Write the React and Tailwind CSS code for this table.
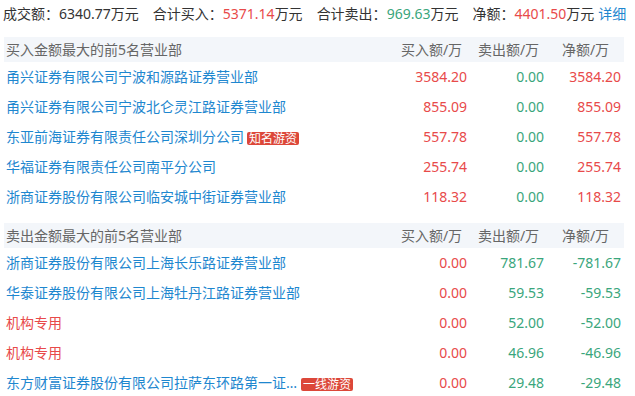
import React from 'react';

const RED = 'text-[#e84a4a]';
const GREEN = 'text-[#3aa67c]';
const BLUE = 'text-[#1e87cf]';

const buyRows = [
  { name: '甬兴证券有限公司宁波和源路证券营业部', buy: '3584.20', sell: '0.00', net: '3584.20' },
  { name: '甬兴证券有限公司宁波北仑灵江路证券营业部', buy: '855.09', sell: '0.00', net: '855.09' },
  { name: '东亚前海证券有限责任公司深圳分公司', badge: '知名游资', buy: '557.78', sell: '0.00', net: '557.78' },
  { name: '华福证券有限责任公司南平分公司', buy: '255.74', sell: '0.00', net: '255.74' },
  { name: '浙商证券股份有限公司临安城中街证券营业部', buy: '118.32', sell: '0.00', net: '118.32' },
];

const sellRows = [
  { name: '浙商证券股份有限公司上海长乐路证券营业部', buy: '0.00', sell: '781.67', net: '-781.67' },
  { name: '华泰证券股份有限公司上海牡丹江路证券营业部', buy: '0.00', sell: '59.53', net: '-59.53' },
  { name: '机构专用', inst: true, buy: '0.00', sell: '52.00', net: '-52.00' },
  { name: '机构专用', inst: true, buy: '0.00', sell: '46.96', net: '-46.96' },
  { name: '东方财富证券股份有限公司拉萨东环路第一证券营业部', badge: '一线游资', clip: true, buy: '0.00', sell: '29.48', net: '-29.48' },
];

const Header = ({ title }) => (
  <div className="flex h-[25px] items-center bg-[#f3f6fa] text-[#666]">
    <div className="flex-1 pl-[2px]">{title}</div>
    <div className="w-[77px] text-center">买入额/万</div>
    <div className="w-[77px] text-center">卖出额/万</div>
    <div className="w-[77px] text-center">净额/万</div>
  </div>
);

const Row = ({ row, netColor }) => (
  <div className="flex h-[30px] items-center">
    <div className="flex min-w-0 flex-1 items-center pl-[2px]">
      <span className={`${row.inst ? RED : BLUE} ${row.clip ? 'max-w-[292px] truncate' : 'whitespace-nowrap'}`}>
        {row.name}
      </span>
      {row.badge && (
        <span className="ml-[3px] mt-[3px] rounded-[2px] bg-[#dc4739] px-[2px] text-[12px] leading-[13px] text-white">
          {row.badge}
        </span>
      )}
    </div>
    <div className={`w-[77px] pr-[3px] text-right ${RED}`}>{row.buy}</div>
    <div className={`w-[77px] pr-[3px] text-right ${GREEN}`}>{row.sell}</div>
    <div className={`w-[77px] pr-[3px] text-right ${netColor}`}>{row.net}</div>
  </div>
);

export default function App() {
  return (
    <div
      className="h-[396px] w-[635px] overflow-hidden bg-white text-[14px] text-[#333]"
      style={{ fontFamily: '"Noto Sans", "Noto Sans CJK SC", sans-serif' }}
    >
      <div className="flex h-[26px] items-center whitespace-nowrap pl-[3px]">
        <span className="mr-[14px]">成交额：6340.77万元</span>
        <span className="mr-[14px]">
          合计买入：<span className={RED}>5371.14</span>万元
        </span>
        <span className="mr-[14px]">
          合计卖出：<span className={GREEN}>969.63</span>万元
        </span>
        <span>
          净额：<span className={RED}>4401.50</span>万元
        </span>
        <span className={`ml-[4px] ${BLUE}`}>详细</span>
      </div>

      <div className="mx-[4px] mt-[11px] w-[620px] leading-[20px]">
        <Header title="买入金额最大的前5名营业部" />
        {buyRows.map((r, i) => (
          <Row key={i} row={r} netColor={RED} />
        ))}
        <div className="h-[11px]" />
        <Header title="卖出金额最大的前5名营业部" />
        {sellRows.map((r, i) => (
          <Row key={i} row={r} netColor={GREEN} />
        ))}
      </div>
    </div>
  );
}
